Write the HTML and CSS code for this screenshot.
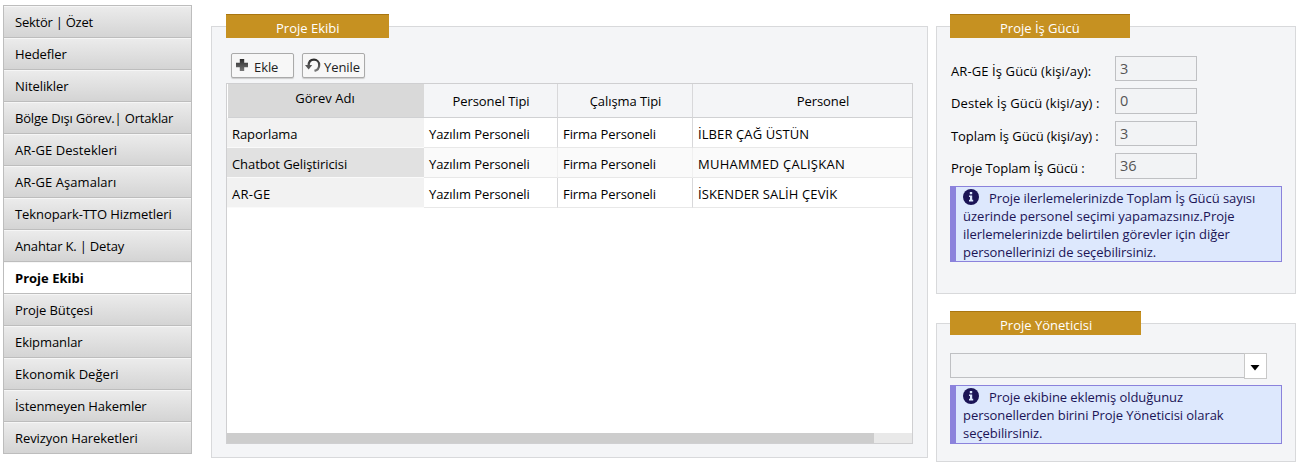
FILE: index.html
```
<!DOCTYPE html>
<html lang="tr">
<head>
<meta charset="utf-8">
<title>Proje Ekibi</title>
<link rel="stylesheet" href="styles.css">
</head>
<body>
<div class="page">
  <nav class="menu">
    <a class="item narrow">Sektör | Özet</a>
    <a class="item">Hedefler</a>
    <a class="item">Nitelikler</a>
    <a class="item tight">Bölge Dışı Görev.| Ortaklar</a>
    <a class="item wide">AR-GE Destekleri</a>
    <a class="item wide">AR-GE Aşamaları</a>
    <a class="item">Teknopark-TTO Hizmetleri</a>
    <a class="item tight">Anahtar K. | Detay</a>
    <a class="item active">Proje Ekibi</a>
    <a class="item">Proje Bütçesi</a>
    <a class="item">Ekipmanlar</a>
    <a class="item wide">Ekonomik Değeri</a>
    <a class="item">İstenmeyen Hakemler</a>
    <a class="item">Revizyon Hareketleri</a>
  </nav>

  <section class="panel team">
    <h2 class="legend team-legend">Proje Ekibi</h2>
    <div class="toolbar">
      <button class="btn"><svg width="14" height="14" viewBox="0 0 14 14"><defs><linearGradient id="g" x1="0" y1="0" x2="0" y2="1"><stop offset="0" stop-color="#2c2c2c"/><stop offset="1" stop-color="#777"/></linearGradient></defs><path d="M4.800 1h4.400v3.800H13v4.400H9.200V13H4.800V9.200H1V4.800h3.800z" fill="url(#g)"/></svg><span>Ekle</span></button>
      <button class="btn refresh"><svg width="16" height="15" viewBox="0 0 16 15"><path d="M3.600 8C3.600 4 5.800 1.700 9 1.700a5.200 5.200 0 0 1 5.200 5.200c0 3-1.900 5.200-4.700 6" fill="none" stroke="url(#g)" stroke-width="2.200"/><path d="M0 7h7.200L3.700 11.500z" fill="#555"/></svg><span>Yenile</span></button>
    </div>
    <div class="grid">
      <div class="row head"><div class="sorted">Görev Adı</div><div>Personel Tipi</div><div>Çalışma Tipi</div><div>Personel</div></div>
      <div class="row"><div>Raporlama</div><div>Yazılım Personeli</div><div>Firma Personeli</div><div class="caps">İLBER ÇAĞ ÜSTÜN</div></div>
      <div class="row alt"><div>Chatbot Geliştiricisi</div><div>Yazılım Personeli</div><div>Firma Personeli</div><div class="caps more">MUHAMMED ÇALIŞKAN</div></div>
      <div class="row"><div class="more">AR-GE</div><div>Yazılım Personeli</div><div>Firma Personeli</div><div class="caps">İSKENDER SALİH ÇEVİK</div></div>
      <div class="scroll"><div class="thumb"></div></div>
    </div>
  </section>

  <div class="side">
    <section class="panel power">
      <h2 class="legend power-legend">Proje İş Gücü</h2>
      <div class="fields">
        <label class="wide">AR-GE İş Gücü (kişi/ay):</label><div class="input">3</div>
        <label class="wide">Destek İş Gücü (kişi/ay) :</label><div class="input tall">0</div>
        <label>Toplam İş Gücü (kişi/ay) :</label><div class="input">3</div>
        <label>Proje Toplam İş Gücü :</label><div class="input tall">36</div>
      </div>
      <div class="info"><svg class="i" width="16" height="16" viewBox="0 0 16 16"><circle cx="8" cy="8" r="8" fill="#1b1456"/><path d="M6.800 3h2.400v2.300H6.800zM6 6.500h3.200v4.300h1v1.700H6v-1.700h1V8.100H6z" fill="#dde8fd"/></svg>Proje ilerlemelerinizde Toplam İş Gücü sayısı<br><span class="wide">üzerinde personel seçimi yapamazsınız.Proje</span><br>ilerlemelerinizde belirtilen görevler için diğer<br>personellerinizi de seçebilirsiniz.</div>
    </section>
    <section class="panel manager">
      <h2 class="legend manager-legend">Proje Yöneticisi</h2>
      <div class="combo"><div class="combo-text"></div><div class="combo-btn"><svg width="10" height="6" viewBox="0 0 10 6"><path d="M0.500 0h9L5 5.500z" fill="#000"/></svg></div></div>
      <div class="info"><svg class="i" width="16" height="16" viewBox="0 0 16 16"><circle cx="8" cy="8" r="8" fill="#1b1456"/><path d="M6.800 3h2.400v2.300H6.800zM6 6.500h3.200v4.300h1v1.700H6v-1.700h1V8.100H6z" fill="#dde8fd"/></svg>Proje ekibine eklemiş olduğunuz<br>personellerden birini Proje Yöneticisi olarak<br>seçebilirsiniz.</div>
    </section>
  </div>
</div>
</body>
</html>
```
FILE: styles.css
```
* { box-sizing: border-box; }
body { margin: 0; background: #fff; color: #000; font: 13px/18px "Open Sans", "Noto Sans", sans-serif; letter-spacing: -0.08px; }
.page { display: flex; align-items: flex-start; height: 476px; padding: 5px 0 0 3px; overflow: hidden; white-space: nowrap; }

.menu { width: 189px; border: 1px solid #bdbdbd; border-bottom: 0; }
.item { display: block; height: 32px; padding: 7px 0 0 11px; border-bottom: 1px solid #bdbdbd; background: linear-gradient(#ececec, #d4d4d4); box-shadow: inset 0 1px #f6f6f6; }
.item.active { background: #fff; font-weight: 700; letter-spacing: 0; }
.wide { letter-spacing: 0.05px; }
.tight { letter-spacing: -0.18px; }
.narrow { letter-spacing: -0.25px; }

.panel { border: 1px solid #d8d9db; background: #f4f5f7; }
.legend { height: 24px; margin: -13px 0 0 14px; padding: 4px 0 0 50px; border-top: 1px solid #a97610; background: #c69121; color: #fff; font-size: 13px; font-weight: 400; line-height: 18px; letter-spacing: 0; }
.team { width: 717px; height: 432px; margin: 21px 0 0 19px; }
.team-legend { width: 163px; }

.toolbar { display: flex; gap: 8px; margin: 15px 0 0 19px; }
.btn { display: flex; align-items: flex-start; width: 63px; height: 25px; padding: 4px 0 0 3px; border: 1px solid #aaa; border-radius: 2px; background: #f7f7f7; box-shadow: 0 1px 1px #ccc; color: #222; font: inherit; letter-spacing: inherit; }
.btn span { margin: 0 0 0 5px; }
.btn svg { flex: none; }
.btn.refresh { padding-left: 2px; }
.btn.refresh span { margin-left: 3px; }

.grid { display: flex; flex-direction: column; width: 687px; height: 361px; margin: 5px 0 0 14px; border: 1px solid #cfcfd1; background: #fff; }
.row { display: grid; grid-template-columns: 197px 134px 135px 219px; height: 30px; }
.row > div { padding: 7px 0 0 5px; border-right: 1px solid #d8d8da; border-bottom: 1px solid #e8e8e8; }
.row > div:first-child { border-right: 0; border-bottom-color: #fafafa; background: #f2f2f2; }
.row > div:last-child { border-right: 0; }
.row.alt > div { border-right-color: #f0f0f0; background: #fafafa; }
.row.alt > div:first-child { background: #e1e1e1; }
.row > .caps { letter-spacing: 0.1px; }
.row > .more { letter-spacing: 0.28px; }
.row.head { height: 34px; }
.row.head > div { padding: 8px 0 0 1px; border-bottom-color: #d0d1d3; background: #f4f5f7; text-align: center; }
.row.head > div:last-child { padding-left: 41px; }
.row.head > .sorted { margin-left: 1px; padding: 5px 2px 0 0; border-bottom-color: #d0d1d3; background: #d9d9d9; letter-spacing: 0.05px; }
.scroll { height: 10px; margin-top: auto; background: #e9e9e9; }
.thumb { width: 647px; height: 10px; background: #cdcdcd; }

.side { width: 360px; margin: 21px 0 0 8px; }
.power { height: 268px; }
.power-legend { width: 180px; }
.fields { display: grid; grid-template-columns: 165px 82px; grid-auto-rows: 32.333px; margin: 18px 0 0 13px; }
.fields label { padding: 6px 0 0 1px; }
.fields .wide { letter-spacing: 0.1px; }
.input { height: 25px; padding: 3px 0 0 4px; border: 1px solid #bfc0c3; background: #f2f3f5; color: #555; font-size: 14.500px; }
.input.tall { height: 26px; }
.info { width: 332px; margin: 0 0 0 13px; padding: 2px 0 0 7px; border: 1px solid #8b82dc; border-left-width: 6px; background: #dde8fd; color: #1b1456; line-height: 18px; letter-spacing: -0.06px; }
.info .wide { letter-spacing: 0.02px; }
.power .info { height: 76px; margin-top: 1px; }
.i { margin-right: 10px; vertical-align: -2px; }
.manager { height: 139px; margin-top: 29px; }
.manager-legend { width: 191px; }
.combo { display: flex; margin: 18px 0 0 13px; }
.combo-text { width: 294px; height: 25px; border: 1px solid #bfc0c3; border-right: 0; background: #f2f3f5; }
.combo-btn { display: flex; align-items: center; justify-content: center; width: 23px; height: 26px; padding: 3px 2px 0 0; border: 1px solid #c8c8c8; background: #fff; }
.manager .info { height: 59px; margin-top: 6px; }
.power-legend, .manager-legend { margin-left: 13px; }
```
